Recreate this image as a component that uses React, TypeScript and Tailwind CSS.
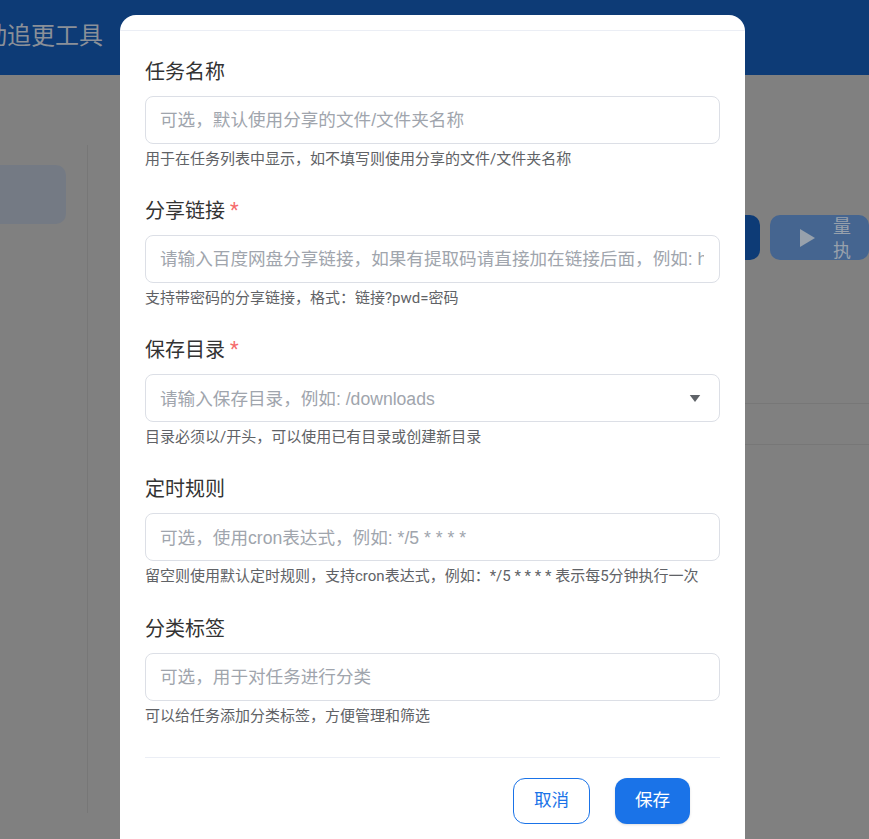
const fontStack = "font-['Roboto','Noto_Sans_CJK_SC',sans-serif]"

function Field({
  label,
  required,
  placeholder,
  hint,
  select,
}: {
  label: string
  required?: boolean
  placeholder: string
  hint: string
  select?: boolean
}) {
  return (
    <div className="mb-[26.2px]">
      <label className="mb-[11px] flex h-[30px] items-center pt-[4px] text-[20px] leading-[26px] text-[#333333]">
        {label}
        {required && <span className="ml-[5px] -translate-y-[1px] text-[20px] text-[#f56c6c]">*</span>}
      </label>
      <div className="relative">
        <input
          readOnly
          placeholder={placeholder}
          className="block h-[48px] w-full rounded-[8px] border border-[#dcdfe6] bg-white pt-[2px] pr-[15px] pl-[14px] font-['Liberation_Sans','Noto_Sans_CJK_SC',sans-serif] text-[17.6px] outline-none placeholder:text-[#a0a5ad]"
        />
        {select && (
          <svg viewBox="0 0 12 8" className="absolute right-[19px] top-[21px] h-[7px] w-[12px]">
            <path d="M0 0h12L6 8z" fill="#5f6368" />
          </svg>
        )}
      </div>
      <p className="mt-[4px] h-[20px] pt-[1px] text-[15px] leading-[20px] text-[#606266]">{hint}</p>
    </div>
  )
}

export default function App() {
  return (
    <div className={`relative h-[839px] w-[869px] overflow-hidden bg-[#808080] ${fontStack}`}>
      {/* Page behind the overlay */}
      <header className="flex h-[75px] items-center bg-[#0d3b76] pb-[3px] pl-[7px]">
        <h1 className="-ml-[24px] text-[24px] font-normal whitespace-nowrap text-[#8b9098]">动追更工具</h1>
      </header>

      <div className="flex h-[738px] pt-[70px]">
        <aside className="w-[88px] shrink-0 border-r border-[#777777] pt-[20px]">
          <div className="-ml-[16px] h-[59px] w-[82px] rounded-[10px] bg-[#747a84]" />
        </aside>

        <main className="flex min-w-0 flex-1 flex-col">
          <div className="flex justify-end gap-[10px] pt-[70px]">
            <div className="h-[45px] w-[100px] rounded-[10px] bg-[#0d3b76]" />
            <div className="flex h-[45px] w-[99px] items-start gap-[18px] overflow-hidden rounded-[10px] bg-[#456590] pl-[30px] text-[#98a1ac]">
              <svg viewBox="0 0 15 18" className="mt-[14px] h-[18px] w-[15px] shrink-0">
                <path d="M0 0l15 9L0 18z" fill="#98a1ac" />
              </svg>
              <div className="text-[18px] leading-[24px]">
                <div>量</div>
                <div>执</div>
              </div>
            </div>
          </div>
          <div className="mt-[143px] ml-[40px] h-[42px] border-y border-[#777777]" />
        </main>
      </div>

      {/* Dialog */}
      <div className="absolute top-[15px] left-[120px] h-[900px] w-[625px] rounded-t-[16px] bg-white">
        <div className="h-[16px] border-b border-[#ebeef5]" />
        <form className="px-[25px] pt-[23.8px]">
          <Field
            label="任务名称"
            placeholder="可选，默认使用分享的文件/文件夹名称"
            hint="用于在任务列表中显示，如不填写则使用分享的文件/文件夹名称"
          />
          <Field
            label="分享链接"
            required
            placeholder="请输入百度网盘分享链接，如果有提取码请直接加在链接后面，例如: https://pan.baidu.com/s/xxxx"
            hint="支持带密码的分享链接，格式：链接?pwd=密码"
          />
          <Field
            label="保存目录"
            required
            select
            placeholder="请输入保存目录，例如: /downloads"
            hint="目录必须以/开头，可以使用已有目录或创建新目录"
          />
          <Field
            label="定时规则"
            placeholder="可选，使用cron表达式，例如: */5 * * * *"
            hint="留空则使用默认定时规则，支持cron表达式，例如：*/5 * * * * 表示每5分钟执行一次"
          />
          <Field
            label="分类标签"
            placeholder="可选，用于对任务进行分类"
            hint="可以给任务添加分类标签，方便管理和筛选"
          />
          <div className="mt-[32px] flex justify-end gap-[25px] border-t border-[#ebeef5] pt-[20px] pr-[30px]">
            <button
              type="button"
              className="h-[46px] w-[77px] rounded-[12px] border border-[#1a73e8] bg-white text-[17.6px] text-[#1a73e8]"
            >
              取消
            </button>
            <button
              type="button"
              className="h-[46px] w-[75px] rounded-[12px] bg-[#1a73e8] text-[17.6px] text-white shadow-sm"
            >
              保存
            </button>
          </div>
        </form>
      </div>
    </div>
  )
}
